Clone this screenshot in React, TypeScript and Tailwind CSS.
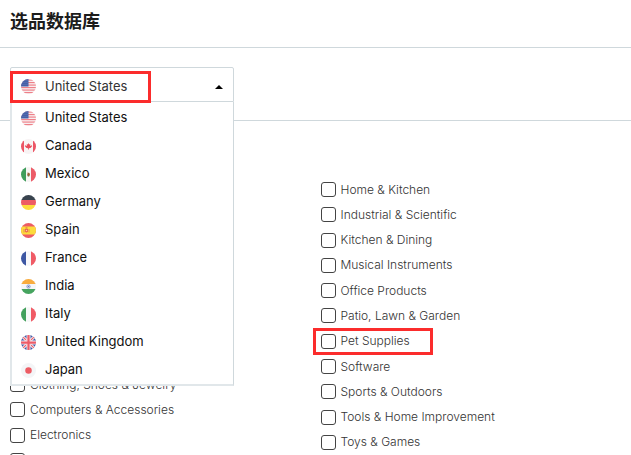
import { useId, useState } from "react";
import type { ReactNode } from "react";

const sans = "font-[Inter,'Noto_Sans_CJK_SC',sans-serif]";

const flags: Record<string, ReactNode> = {
  "United States": (
    <>
      <rect width="30" height="30" fill="#f8eef0" />
      {[0, 1, 2, 3, 4, 5].map((i) => (
        <rect key={i} y={i * 5 + 1} width="30" height="2.3" fill="#ee8088" />
      ))}
      <rect width="15" height="15" fill="#4560a8" />
      {[3, 7, 11].map((y) =>
        [4, 8, 12].map((x) => <circle key={`${x}-${y}`} cx={x} cy={y} r="0.7" fill="#aebbe0" />),
      )}
    </>
  ),
  Canada: (
    <>
      <rect width="30" height="30" fill="#f8f3f4" />
      <rect width="6" height="30" fill="#ec5565" />
      <rect x="24" width="6" height="30" fill="#ec5565" />
      <path d="M15 8l1.500 3 2-1-.5 4 3-1.500 1.500 1.500-3.500 4-3.200.3V21h-1.600v-2.700l-3.200-.3L7.500 14 9 12.500l3 1.500-.5-4 2 1z" fill="#e94c5a" />
    </>
  ),
  Mexico: (
    <>
      <rect width="30" height="30" fill="#f7f5f4" />
      <rect width="10" height="30" fill="#3f9d5c" />
      <rect x="20" width="10" height="30" fill="#ec5b67" />
      <path d="M13 11l4 1 1 4-3 3-3-3 1-2z" fill="#9a6238" />
      <path d="M12 17q3 4 6 0" stroke="#5d9c66" fill="none" />
    </>
  ),
  Germany: (
    <>
      <rect width="30" height="10" fill="#38434e" />
      <rect y="10" width="30" height="10" fill="#ed5c64" />
      <rect y="20" width="30" height="10" fill="#fcdc3c" />
    </>
  ),
  Spain: (
    <>
      <rect width="30" height="30" fill="#ed5c64" />
      <rect y="7" width="30" height="16" fill="#fcdc3c" />
      <path d="M6 12v7M16 12v7" stroke="#e98a52" strokeWidth="2" />
      <path d="M8 12h6v5q-3 4-6 0z" fill="#e9604f" />
      <path d="M9 10h4" stroke="#d85b43" strokeWidth="2" />
      <circle cx="11" cy="15" r="1.5" fill="#fbd7a0" />
    </>
  ),
  France: (
    <>
      <rect width="30" height="30" fill="#f8f8fa" />
      <rect width="10" height="30" fill="#3e57a3" />
      <rect x="20" width="10" height="30" fill="#f05b66" />
    </>
  ),
  India: (
    <>
      <rect width="30" height="30" fill="#f5f6f9" />
      <rect width="30" height="10" fill="#f9ac3e" />
      <rect y="20" width="30" height="10" fill="#46a45f" />
      <circle cx="15" cy="15" r="3.500" fill="#c6cfea" stroke="#7587c4" strokeWidth="1.200" />
      <circle cx="15" cy="15" r="1" fill="#4560a8" />
    </>
  ),
  Italy: (
    <>
      <rect width="30" height="30" fill="#f7f8f8" />
      <rect width="10" height="30" fill="#43a05d" />
      <rect x="20" width="10" height="30" fill="#f05b66" />
    </>
  ),
  "United Kingdom": (
    <>
      <rect width="30" height="30" fill="#4159a4" />
      <path d="M0 0l30 30M30 0L0 30" stroke="#f6eef2" strokeWidth="6" />
      <path d="M0 0l30 30M30 0L0 30" stroke="#ed5c68" strokeWidth="2.200" />
      <path d="M15 0v30M0 15h30" stroke="#f6eef2" strokeWidth="8" />
      <path d="M15 0v30M0 15h30" stroke="#ed5c68" strokeWidth="4.500" />
    </>
  ),
  Japan: (
    <>
      <rect width="30" height="30" fill="#f4f5f7" />
      <circle cx="15" cy="15" r="6.500" fill="#ed5c64" />
    </>
  ),
};

const countries = Object.keys(flags);

const leftCategories = [
  "Clothing, Shoes & Jewelry",
  "Computers & Accessories",
  "Electronics",
  "Grocery & Gourmet Food",
];

const rightCategories = [
  "Home & Kitchen",
  "Industrial & Scientific",
  "Kitchen & Dining",
  "Musical Instruments",
  "Office Products",
  "Patio, Lawn & Garden",
  "Pet Supplies",
  "Software",
  "Sports & Outdoors",
  "Tools & Home Improvement",
  "Toys & Games",
];

function Flag({ country }: { country: string }) {
  const clip = useId();
  return (
    <svg viewBox="0 0 30 30" className="size-[15px] shrink-0" aria-hidden="true">
      <clipPath id={clip}>
        <circle cx="15" cy="15" r="15" />
      </clipPath>
      <g clipPath={`url(#${clip})`}>{flags[country]}</g>
    </svg>
  );
}

function Highlight({ className }: { className: string }) {
  return <span aria-hidden="true" className={`pointer-events-none absolute border-3 border-[#fb2c2c] ${className}`} />;
}

function CountrySelect() {
  const [selected, setSelected] = useState("United States");
  return (
    <div className="relative w-56 text-[13px] text-[#333]">
      <button
        type="button"
        aria-haspopup="listbox"
        aria-expanded="true"
        className="flex h-[35px] w-full items-center gap-[9px] rounded-t-xs border border-[#cfd8dc] bg-white px-[10px] pt-1"
      >
        <Flag country={selected} />
        {selected}
        <svg viewBox="0 0 8 4" className="ml-auto h-1 w-2" aria-hidden="true">
          <path d="M0 4L4 0l4 4z" fill="#000" />
        </svg>
      </button>
      <ul
        role="listbox"
        aria-label="Country"
        className="absolute inset-x-0 top-full z-10 grid h-[284px] auto-rows-fr border-r border-b-2 border-l-2 border-[#e1e7ea] border-r-[#cfd8dc] bg-white pt-[2px]"
      >
        {countries.map((country) => (
          <li key={country} role="option" aria-selected={country === selected} className="flex">
            <button
              type="button"
              onClick={() => setSelected(country)}
              className="flex w-full items-center gap-[9px] px-[9px] text-[#111]"
            >
              <Flag country={country} />
              {country}
            </button>
          </li>
        ))}
      </ul>
      <Highlight className="top-1 left-0 z-20 h-8 w-[141px]" />
    </div>
  );
}

function Category({ name }: { name: string }) {
  return (
    <li className="relative flex items-center">
      <label className="flex items-center gap-[5px] whitespace-nowrap">
        <input type="checkbox" className="size-[15px] appearance-none rounded-[3px] border border-[#444] bg-white checked:bg-[#444]" />
        {name}
      </label>
      {name === "Pet Supplies" && <Highlight className="-inset-y-px -left-2 w-[120px]" />}
    </li>
  );
}

export default function App() {
  return (
    <div className={`h-screen overflow-hidden bg-white ${sans}`}>
      <header className="border-b border-[#cfd8dc] px-[10px] pt-[10px] pb-[13px]">
        <h1 className="text-lg leading-6 font-bold text-[#1c1c1c]">选品数据库</h1>
      </header>
      <section className="border-b border-[#cfd8dc] px-[10px] pt-[19px] pb-[18px]">
        <CountrySelect />
      </section>
      <main className="grid grid-cols-2 items-end pt-14 pl-[10px] text-xs font-light text-[#333]">
        <ul className="-mb-[18px] grid h-[101px] auto-rows-fr">
          {leftCategories.map((name) => (
            <Category key={name} name={name} />
          ))}
        </ul>
        <ul className="grid h-[278px] auto-rows-fr">
          {rightCategories.map((name) => (
            <Category key={name} name={name} />
          ))}
        </ul>
      </main>
    </div>
  );
}
